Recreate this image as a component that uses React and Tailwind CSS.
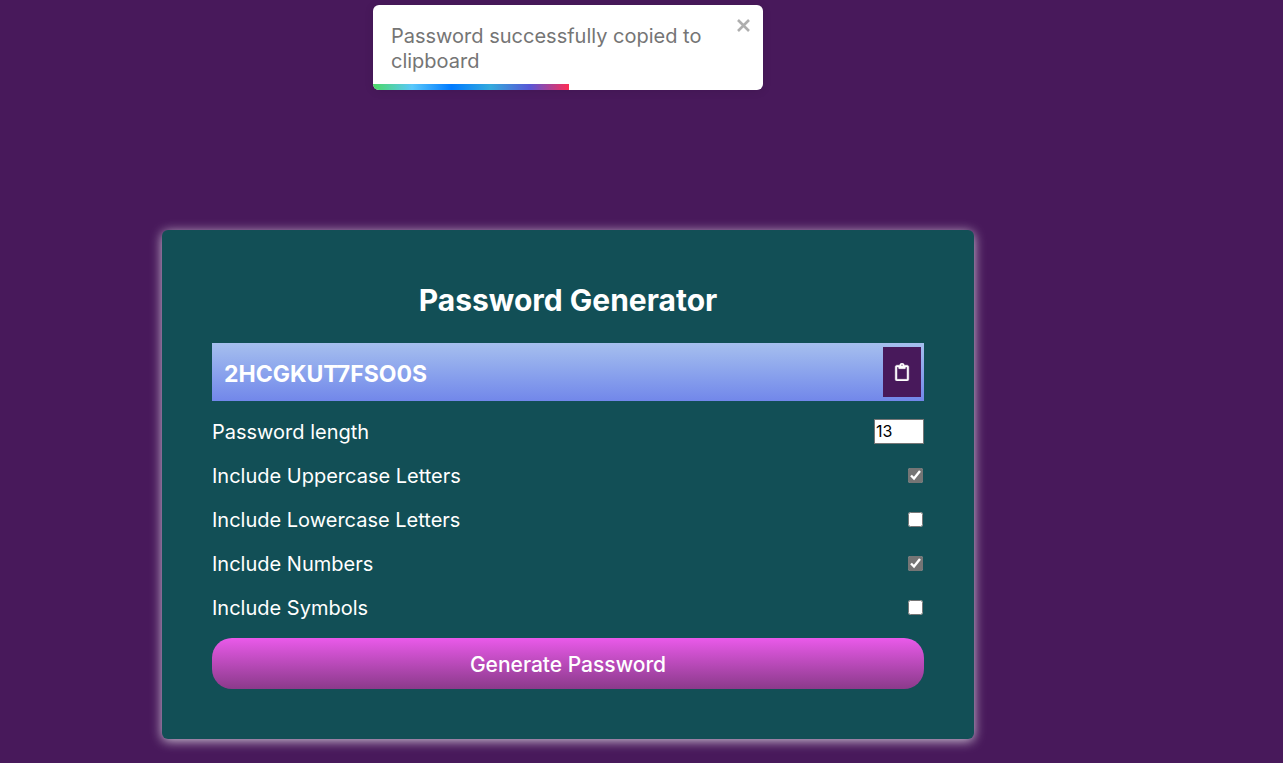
import { useState } from "react";
import { FaRegClipboard } from "react-icons/fa";

const CHARS = {
  upper: "ABCDEFGHIJKLMNOPQRSTUVWXYZ",
  lower: "abcdefghijklmnopqrstuvwxyz",
  numbers: "0123456789",
  symbols: "!@#$%^&*()_+-=[]{}",
};

const OPTIONS = [
  { id: "upper", label: "Include Uppercase Letters" },
  { id: "lower", label: "Include Lowercase Letters" },
  { id: "numbers", label: "Include Numbers" },
  { id: "symbols", label: "Include Symbols" },
];

function Toast({ onClose }) {
  return (
    <div
      role="status"
      className="relative flex w-[390px] items-start justify-between overflow-hidden rounded-md bg-white pt-[19px] pb-4 pl-[18px] shadow-[0_1px_10px_rgba(0,0,0,0.1)]"
    >
      <p className="w-[320px] text-[20px] leading-[25px] text-[#757575]">
        Password successfully copied to clipboard
      </p>
      <button
        type="button"
        aria-label="Close"
        onClick={onClose}
        className="-mt-[5px] mr-3 cursor-pointer text-[#aeaeae]"
      >
        <svg viewBox="0 0 15 13" className="h-[13px] w-[15px]" fill="none" stroke="currentColor" strokeWidth="2.6">
          <path d="M2 1l11 11M13 1L2 12" />
        </svg>
      </button>
      <div className="absolute bottom-0 left-0 h-1.5 w-[196px] bg-[linear-gradient(to_right,#4cd964,#5ac8fa,#007aff,#34aadc,#5856d6,#ff2d55)]" />
    </div>
  );
}

export default function App() {
  const [toast, setToast] = useState(true);
  const [password, setPassword] = useState("2HCGKUT7FSO0S");
  const [length, setLength] = useState(13);
  const [checked, setChecked] = useState({ upper: true, lower: false, numbers: true, symbols: false });

  const generate = () => {
    const pool = OPTIONS.filter((o) => checked[o.id]).map((o) => CHARS[o.id]).join("");
    if (!pool) return;
    setPassword(
      Array.from({ length: Number(length) }, () => pool[Math.floor(Math.random() * pool.length)]).join("")
    );
  };

  return (
    <div className="min-h-screen bg-[#48195b] pr-[147px] font-['Inter',sans-serif] text-white">
      <div className="flex h-[230px] items-start justify-center pt-[5px]">
        {toast && <Toast onClose={() => setToast(false)} />}
      </div>
      <main className="mx-auto max-w-[812px] rounded-md bg-[#124f56] p-[50px] shadow-[0_2px_12px_rgba(255,255,255,0.75)]">
        <h1 className="mb-[23px] text-center text-[30px] leading-10 font-bold">Password Generator</h1>
        <div className="mb-4 flex h-[58px] items-center justify-between bg-linear-to-b from-[#a6bfee] to-[#7287ea] pr-[3px] pl-3">
          <h2 className="pt-1 text-[23px] leading-8 font-bold">{password}</h2>
          <button
            type="button"
            aria-label="Copy password"
            onClick={() => setToast(true)}
            className="flex h-[50px] w-[38px] cursor-pointer items-center justify-center bg-[#48195b]"
          >
            <FaRegClipboard size={18} strokeWidth={14} />
          </button>
        </div>
        <div className="mb-[17px] flex flex-col gap-4 text-[20px] leading-7">
          <div className="flex h-7 items-center justify-between">
            <label htmlFor="length" className="pt-0.5">Password length</label>
            <input
              id="length"
              type="number"
              min="8"
              max="20"
              value={length}
              onChange={(e) => setLength(e.target.value)}
              className="h-[25px] w-[50px] border border-[#767676] bg-white px-px text-[16px] text-black"
            />
          </div>
          {OPTIONS.map(({ id, label }) => (
            <div key={id} className="flex h-7 items-center justify-between">
              <label htmlFor={id} className="pt-0.5">{label}</label>
              <input
                id={id}
                type="checkbox"
                checked={checked[id]}
                onChange={(e) => setChecked({ ...checked, [id]: e.target.checked })}
                className="mr-px size-[15px] accent-[#757575]"
              />
            </div>
          ))}
        </div>
        <button
          type="button"
          onClick={generate}
          className="h-[51px] w-full cursor-pointer rounded-[20px] bg-linear-to-b from-[#ea5aea] to-[#8b3a8b] pt-0.5 text-[21px] font-medium"
        >
          Generate Password
        </button>
      </main>
    </div>
  );
}
